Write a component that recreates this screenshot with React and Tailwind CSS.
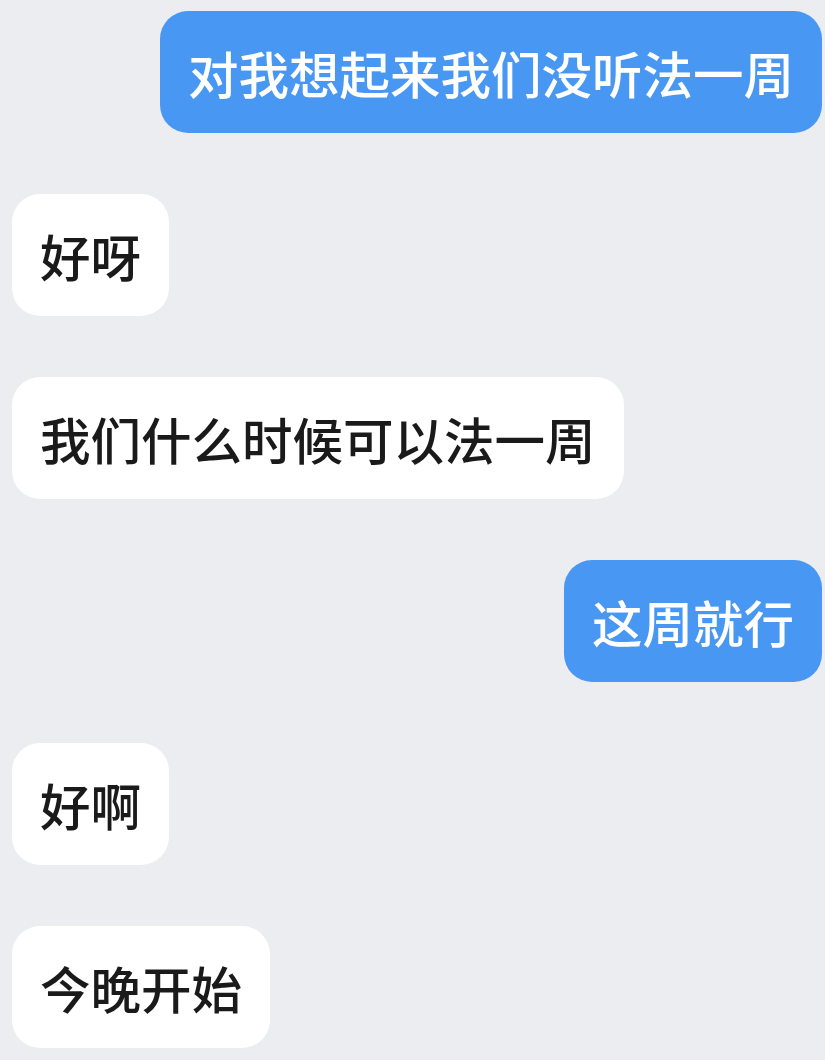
export default function App() {
  const msgs = [
    { me: true, t: "对我想起来我们没听法一周" },
    { me: false, t: "好呀" },
    { me: false, t: "我们什么时候可以法一周" },
    { me: true, t: "这周就行" },
    { me: false, t: "好啊" },
    { me: false, t: "今晚开始" },
  ];
  return (
    <div
      className="w-[825px] h-[1060px] bg-[#ebedf1] flex flex-col gap-[61px] pt-[11px] pl-[12px] pr-[3px] overflow-hidden"
      style={{ fontFamily: '"Noto Sans CJK SC", "Noto Sans", sans-serif' }}
    >
      {msgs.map((m, i) => (
        <div key={i} className={m.me ? "flex justify-end" : "flex justify-start"}>
          <div
            className={
              m.me
                ? "bg-[#4897f2] text-white rounded-[28px] px-[28px] py-[27px] text-[50.5px] font-medium leading-[68px] whitespace-nowrap"
                : "bg-white text-[#1a1a1a] rounded-[28px] px-[28px] py-[27px] text-[50.5px] font-medium leading-[68px] whitespace-nowrap"
            }
          >
            {m.t}
          </div>
        </div>
      ))}
    </div>
  );
}
